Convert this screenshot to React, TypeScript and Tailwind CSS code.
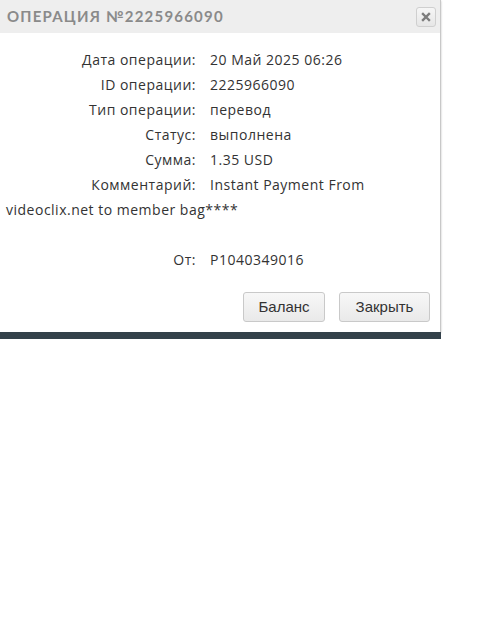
const rows: Array<{ label: string; value: string }> = [
  { label: "Дата операции:", value: "20 Май 2025 06:26" },
  { label: "ID операции:", value: "2225966090" },
  { label: "Тип операции:", value: "перевод" },
  { label: "Статус:", value: "выполнена" },
  { label: "Сумма:", value: "1.35 USD" },
];

function Label({ children }: { children: string }) {
  return <span className="mr-[14px] inline-block w-[190px] text-right font-medium">{children}</span>;
}

export default function App() {
  return (
    <div className="min-h-[640px] w-[495px] bg-white">
      <div className="w-[441px] border-r border-[#c8c8c8] bg-white shadow-[0_1px_2px_rgba(0,0,0,0.25)]">
        <div className="flex h-[33px] items-center justify-between bg-[#eeeeee] pl-[7px] pr-[4px]">
          <span className="text-[15px] font-bold uppercase tracking-[1.2px] text-[#8a8a8a] [font-family:Lato,'Open_Sans',sans-serif]">
            Операция №2225966090
          </span>
          <button className="grid h-[20px] w-[20px] place-items-center rounded-[3px] border border-[#cfcfcf] bg-[linear-gradient(#f6f6f6,#e6e6e6)]">
            <svg viewBox="0 0 10 10" className="h-[10px] w-[10px]" stroke="#7c7c7c" strokeWidth="2.4" strokeLinecap="square">
              <path d="M2 2l6 6M8 2l-6 6" />
            </svg>
          </button>
        </div>
        <div className="px-[6px] pt-[14px] text-[14px] leading-[25px] tracking-[0.5px] text-[#333] [font-family:'Open_Sans',sans-serif]">
          {rows.map((r) => (
            <div key={r.label}>
              <Label>{r.label}</Label>
              {r.value}
            </div>
          ))}
          <div>
            <Label>Комментарий:</Label>
            Instant Payment From videoclix.net to member bag****
          </div>
          <div className="h-[25px]" />
          <div>
            <Label>От:</Label>
            P1040349016
          </div>
        </div>
        <div className="flex justify-end gap-[14px] px-[10px] pb-[10px] pt-[20px]">
          <button className="h-[30px] w-[82px] rounded-[3px] border border-[#c9c9c9] bg-[linear-gradient(#f7f7f7,#e9e9e9)] text-[15px] text-[#333] [font-family:'Liberation_Sans',sans-serif]">
            Баланс
          </button>
          <button className="h-[30px] w-[91px] rounded-[3px] border border-[#c9c9c9] bg-[linear-gradient(#f7f7f7,#e9e9e9)] text-[15px] text-[#333] [font-family:'Liberation_Sans',sans-serif]">
            Закрыть
          </button>
        </div>
      </div>
      <div className="h-[7px] w-[441px] bg-[#33414a]" />
    </div>
  );
}
